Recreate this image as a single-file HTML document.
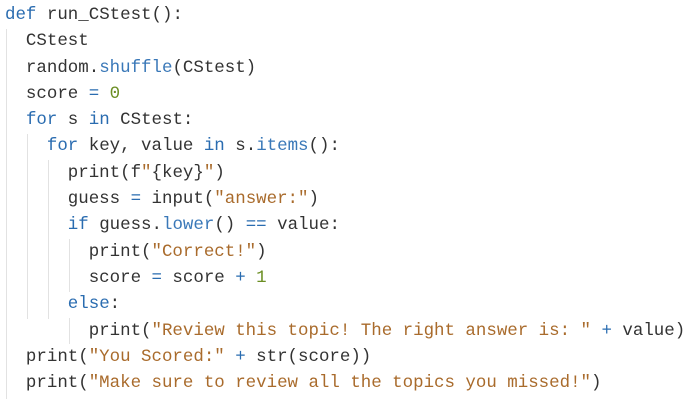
<!DOCTYPE html>
<html><head><style>
body{margin:0;background:#fff;width:687px;height:409px;overflow:hidden;position:relative}
pre{margin:0;position:absolute;left:5px;top:2px;font-family:"Liberation Mono",monospace;font-size:17.45px;line-height:26.3px;color:#333}
.k{color:#2a6cb0}.s{color:#a96b2c}.n{color:#6b8e23}.f{color:#3a78b8}.o{color:#2a6cb0}
.g{position:absolute;width:1px;background:#e2e2e2}
</style></head><body>
<div class="g" style="left:6px;top:29px;height:370px"></div>
<div class="g" style="left:27px;top:134px;height:185px"></div>
<div class="g" style="left:48px;top:160px;height:159px"></div>
<div class="g" style="left:69px;top:239px;height:53px"></div>
<div class="g" style="left:69px;top:318px;height:26px"></div>
<pre><span class="k">def</span> run_CStest():
  CStest
  random.<span class="f">shuffle</span>(CStest)
  score <span class="o">=</span> <span class="n">0</span>
  <span class="k">for</span> s <span class="k">in</span> CStest:
    <span class="k">for</span> key, value <span class="k">in</span> s.<span class="f">items</span>():
      print(f<span class="s">"</span>{key}<span class="s">"</span>)
      guess <span class="o">=</span> input(<span class="s">"answer:"</span>)
      <span class="k">if</span> guess.<span class="f">lower</span>() <span class="o">==</span> value:
        print(<span class="s">"Correct!"</span>)
        score <span class="o">=</span> score <span class="o">+</span> <span class="n">1</span>
      <span class="k">else</span>:
        print(<span class="s">"Review this topic! The right answer is: "</span> <span class="o">+</span> value)
  print(<span class="s">"You Scored:"</span> <span class="o">+</span> str(score))
  print(<span class="s">"Make sure to review all the topics you missed!"</span>)</pre>
</body></html>
